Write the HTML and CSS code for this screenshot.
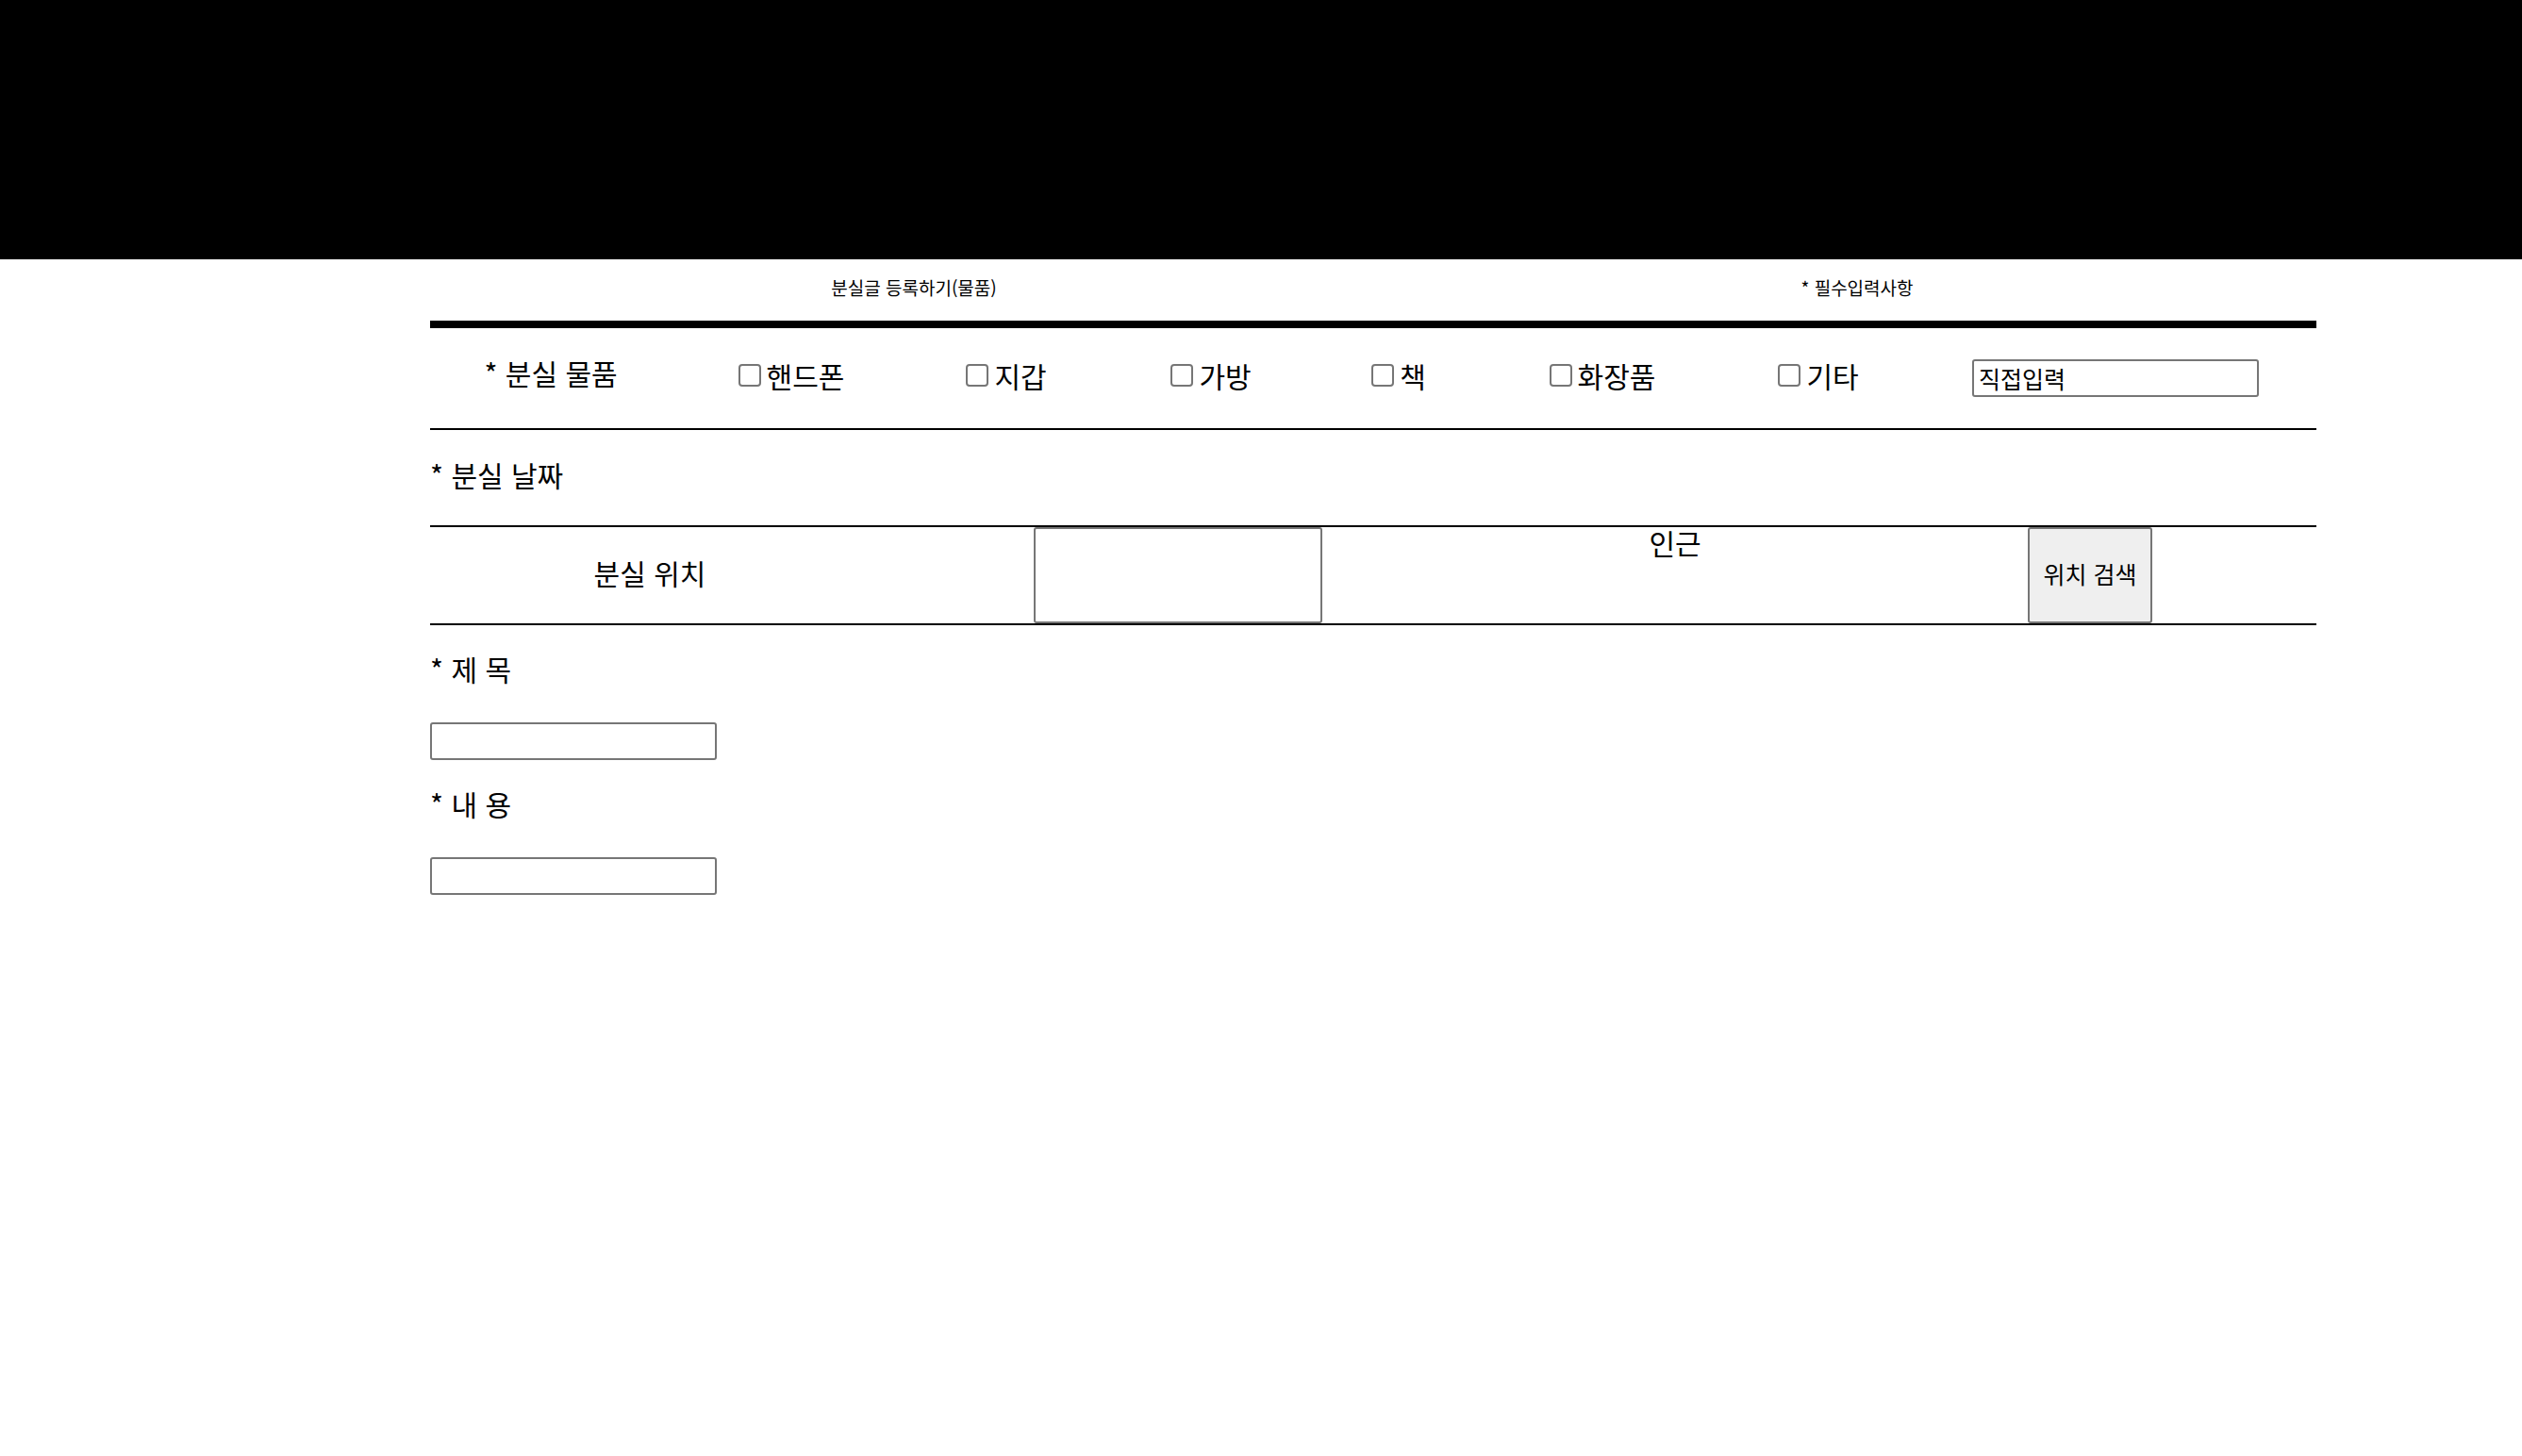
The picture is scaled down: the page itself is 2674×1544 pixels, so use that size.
FILE: index.html
```html
<!DOCTYPE html>
<html lang="ko">
<head>
    <meta charset="UTF-8">
    <meta name="viewport" content="width=device-width, initial-scale=1.0">
    <title>분실글 등록하기</title>
    <link rel="stylesheet" href="styles.css">
</head>
<body>
    <header class="top-bar"></header>

    <div class="container">
        <div class="title-row">
            <div class="title-cell">분실글 등록하기(물품)</div>
            <div class="title-cell">* 필수입력사항</div>
        </div>

        <div class="form-row item-row">
            <div class="row-label">* 분실 물품</div>
            <label class="check"><input type="checkbox">핸드폰</label>
            <label class="check"><input type="checkbox">지갑</label>
            <label class="check"><input type="checkbox">가방</label>
            <label class="check"><input type="checkbox">책</label>
            <label class="check"><input type="checkbox">화장품</label>
            <label class="check"><input type="checkbox">기타</label>
            <input class="text-input etc-input" type="text" value="직접입력">
        </div>

        <div class="form-row date-row">
            <div class="row-label">* 분실 날짜</div>
        </div>

        <div class="form-row place-row">
            <div class="row-label">분실 위치</div>
            <input class="place-input" type="text">
            <div class="near">인근</div>
            <button class="search-btn" type="button">위치 검색</button>
        </div>

        <div class="field">
            <div class="field-label">* 제 목</div>
            <input class="text-input" type="text">
        </div>
        <div class="field">
            <div class="field-label">* 내 용</div>
            <input class="text-input" type="text">
        </div>
    </div>
</body>
</html>
```

FILE: styles.css
```css
body {
    font-family: "Noto Sans CJK KR", "Noto Sans", sans-serif;
    margin: 0;
    padding: 0;
    background-color: #fff;
    color: #000;
}
.top-bar {
    height: 275px;
    background-color: #000;
}
.container {
    width: 2000px;
    margin-left: 456px;
}
.title-row {
    display: grid;
    grid-template-columns: 1fr 1fr;
    align-items: center;
    height: 59px;
    padding-bottom: 6px;
    border-bottom: 8px solid #000;
    font-size: 19px;
}
.title-cell {
    text-align: center;
    padding-left: 26px;
}
.form-row {
    display: grid;
    align-items: center;
    border-bottom: 2px solid #000;
    font-size: 30px;
}
.row-label {
    margin-bottom: 6px;
}
.item-row {
    grid-template-columns: 256px 254px 202px 232px 166px 266px 192px 1fr;
    justify-items: center;
    height: 106px;
}
.item-row .row-label {
    margin-bottom: 12px;
}
.date-row {
    grid-template-columns: 1fr;
    height: 101px;
}
.date-row .row-label {
    margin-bottom: 8px;
}
.place-row {
    grid-template-columns: 466px 654px 400px 1fr;
    justify-items: center;
    align-items: stretch;
    height: 102px;
}
.place-row .row-label {
    align-self: center;
}
.check {
    display: flex;
    align-items: center;
    margin-bottom: 6px;
}
.check input {
    appearance: none;
    -webkit-appearance: none;
    width: 24px;
    height: 24px;
    margin: 0 6px 0 0;
    border: 2px solid #767676;
    border-radius: 4px;
    background: #fff;
}
.text-input {
    box-sizing: border-box;
    width: 304px;
    height: 40px;
    padding: 0 5px;
    border: 2px solid #767676;
    border-radius: 3px;
    font-family: inherit;
    font-size: 25px;
    color: #000;
}
.etc-input {
    margin-left: 6px;
}
.place-input {
    box-sizing: border-box;
    width: 306px;
    height: 102px;
    margin: 0;
    border: 2px solid #767676;
    border-radius: 3px;
}
.near {
    align-self: start;
    line-height: 1.2;
    margin-top: -2px;
}
.search-btn {
    width: 132px;
    height: 102px;
    margin: 0;
    padding: 0 0 4px;
    background-color: #efefef;
    border: 2px solid #767676;
    border-radius: 3px;
    font-family: inherit;
    font-size: 25px;
    color: #000;
}
.field {
    padding-top: 25px;
}
.field-label {
    font-size: 30px;
    line-height: 42px;
    margin-bottom: 36px;
}
.field-label + .text-input {
    display: block;
}
.field + .field {
    padding-top: 25px;
}
```
